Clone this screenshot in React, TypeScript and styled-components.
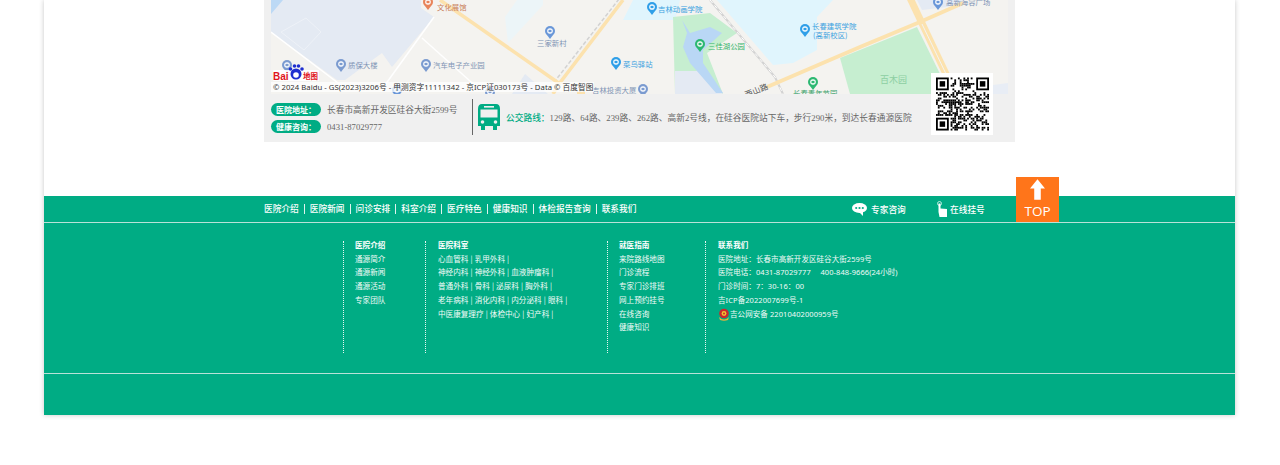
import React from "react";
import styled, { createGlobalStyle } from "styled-components";

const GlobalStyle = createGlobalStyle`
  html, body {
    margin: 0;
    padding: 0;
    background: #ffffff;
    overflow: hidden;
  }
  body {
    font-family: "Liberation Sans", "Noto Sans CJK SC", sans-serif;
  }
`;

const GREEN = "#00ac84";
const ZONE = "#e4eaf3";
const ROAD = "#fce2ae";

const Page = styled.div`
  width: 1191px;
  margin: 0 0 50px 44px;
  background: #ffffff;
  box-shadow: 0 0 5px rgba(0, 0, 0, 0.22);
`;

const MapSection = styled.section`
  height: 196px;
  padding-left: 220px;
  box-sizing: border-box;
`;

const MapPanel = styled.div`
  position: relative;
  width: 751px;
  height: 142px;
  background: #f0f0f0;
  padding: 0 7px;
  box-sizing: border-box;
`;

const MapFrame = styled.div`
  position: relative;
  width: 737px;
  height: 94px;
  overflow: hidden;
`;

const MapSvg = styled.svg`
  display: block;
  font-family: "Noto Sans CJK SC", sans-serif;
`;

const Copyright = styled.div`
  position: absolute;
  left: 0;
  top: 82px;
  width: 323px;
  height: 10px;
  padding-left: 2px;
  box-sizing: border-box;
  background: rgba(255, 255, 255, 0.72);
  color: #333;
  font-family: "Noto Sans", "Noto Sans CJK SC", sans-serif;
  font-size: 7.7px;
  letter-spacing: 0.04px;
  line-height: 10px;
  white-space: nowrap;
`;

const InfoBar = styled.div`
  display: flex;
  align-items: center;
  height: 48px;
  font-family: "Liberation Serif", "Noto Sans CJK SC", serif;
  font-size: 8.7px;
  color: #666;
`;

const AddressBlock = styled.div`
  display: flex;
  flex-direction: column;
  gap: 4px;
  width: 201px;
`;

const AddressRow = styled.div`
  display: flex;
  align-items: center;
  gap: 6px;
  white-space: nowrap;
`;

const Pill = styled.span`
  width: 50px;
  height: 13px;
  border-radius: 7px;
  background: ${GREEN};
  color: #fff;
  font-family: "Noto Sans CJK SC", sans-serif;
  font-size: 8px;
  font-weight: 700;
  line-height: 13px;
  text-align: center;
`;

const RouteBlock = styled.div`
  display: flex;
  align-items: center;
  height: 36px;
  margin-top: -2px;
  border-left: 1px solid #666;
  padding-left: 5px;
  white-space: nowrap;
`;

const RouteText = styled.span`
  margin-left: 6px;
  letter-spacing: 0.03px;
`;

const RouteLabel = styled.span`
  color: ${GREEN};
  font-family: "Noto Sans CJK SC", sans-serif;
  font-weight: 500;
`;

const QrBox = styled.div`
  position: absolute;
  left: 667px;
  top: 73px;
  width: 62px;
  height: 62px;
  background: #fff;
  display: flex;
  align-items: center;
  justify-content: center;
`;

const Footer = styled.footer`
  background: ${GREEN};
  height: 219px;
  color: #fff;
  font-family: "Noto Sans CJK SC", sans-serif;
`;

const NavBar = styled.div`
  position: relative;
  display: flex;
  align-items: center;
  height: 26px;
  padding-left: 220px;
  border-bottom: 1px solid #b9e2d8;
  font-size: 8.7px;
  font-weight: 500;
  white-space: nowrap;
`;

const NavLinks = styled.nav`
  display: flex;
  width: 588px;
`;

const NavLink = styled.span`
  padding: 0 5px;
  line-height: 10px;
  border-left: 1px solid #dff3ee;
  &:first-child {
    padding-left: 0;
    border-left: 0;
  }
`;

const NavTool = styled.span<{ $width: number; $gap: number }>`
  display: flex;
  align-items: center;
  gap: ${(p) => p.$gap}px;
  width: ${(p) => p.$width}px;
`;

const TopButton = styled.div`
  position: absolute;
  left: 972px;
  top: -19px;
  width: 43px;
  height: 45px;
  background: #ff751a;
  display: flex;
  flex-direction: column;
  align-items: center;
  font-family: "Open Sans", "Liberation Sans", sans-serif;
  font-size: 13.5px;
  line-height: 14px;
`;

const TopArrow = styled.svg`
  margin-top: 2px;
  margin-bottom: 4px;
`;

const Columns = styled.div`
  display: flex;
  height: 132px;
  padding: 18px 0 0 299px;
  border-bottom: 1px solid #b9e2d8;
`;

const Column = styled.div<{ $width: number; $pad: number; $contact: boolean }>`
  width: ${(p) => p.$width}px;
  height: 112px;
  padding-top: ${(p) => (p.$contact ? 1 : 0)}px;
  padding-left: ${(p) => p.$pad}px;
  box-sizing: border-box;
  border-left: 1px dotted #e6f6f2;
  font-family: ${(p) => (p.$contact ? `"Noto Sans", "Noto Sans CJK SC", sans-serif` : `"Noto Sans CJK SC", sans-serif`)};
  font-size: ${(p) => (p.$contact ? 7.5 : 7.6)}px;
  letter-spacing: ${(p) => (p.$contact ? 0.08 : 0)}px;
  line-height: 13.7px;
  word-spacing: ${(p) => (p.$contact ? 0 : 0.4)}px;
  white-space: nowrap;
`;

const ColumnTitle = styled.div`
  margin-top: -3px;
  font-weight: 700;
`;

const ColumnRow = styled.div`
  display: flex;
  align-items: center;
  color: #f2fbf8;
`;

type PinProps = { x: number; y: number; color: string };

const Pin = ({ x, y, color }: PinProps) => (
  <g>
    <circle cx={x} cy={y} r={5} fill={color} />
    <path d={`M${x - 3} ${y + 4}L${x} ${y + 8}L${x + 3} ${y + 4}Z`} fill={color} />
    <circle cx={x} cy={y} r={2.8} fill="#fff" />
    <rect x={x - 1.5} y={y - 1.2} width={3} height={2.4} fill={color} />
  </g>
);

type LabelProps = { x: number; y: number; color?: string; size?: number; children: React.ReactNode };

const Label = ({ x, y, color = "#7f93b5", size = 7.4, children }: LabelProps) => (
  <text x={x} y={y} fill={color} fontSize={size}>
    {children}
  </text>
);

const MapPicture = () => (
  <MapSvg width={737} height={94} viewBox="271 0 737 94">
    <rect x={271} y={0} width={737} height={94} fill="#f4f3f0" />
    <polygon points="271,0 421,0 421,8 434,17 392,67 382,53 345,80 337,80 271,32" fill={ZONE} />
    <polygon points="281,32 306,18 321,32 304,50" fill="none" stroke="#eef2f8" strokeWidth={1} />
    <polygon points="271,14 283,0 271,0" fill="#bcd9f5" />
    <polyline points="271,32 342,86" stroke="#fff" strokeWidth={1.5} fill="none" />
    <polyline points="434,17 385,85" stroke="#fff" strokeWidth={1.5} fill="none" />
    <polyline points="422,38 480,90" stroke="#fff" strokeWidth={1.5} fill="none" />
    <polygon points="517,0 543,0 543,5 508,43 505,17" fill="#ecf5f8" />
    <polygon points="633,0 717,0 773,65 793,63 817,50 817,17 833,0 633,0" fill="#e0f5fd" />
    <polygon points="633,0 623,20 660,20 675,20 680,0" fill="#e0f5fd" />
    <polygon points="512,94 525,74 548,94" fill={ZONE} />
    <polygon points="673,17 710,13 737,33 707,53 723,94 675,94" fill="#c6eed0" />
    <polygon points="675,71 700,71 723,94 675,94" fill={ZONE} />
    <polygon points="682,20 690,33 710,27 722,33 703,50 703,63 723,93 716,93 690,63 683,47 687,33" fill="#b9d7f5" />
    <polygon points="840,58 917,27 943,80 943,94 850,94" fill="#c6eed0" />
    <polygon points="917,0 922,10 947,7 965,0" fill={ZONE} />
    <polygon points="993,85 1008,83 1008,94 993,94" fill="#e8edf5" />
    <polyline points="710,0 775,77 783,94" stroke="#d2d2d2" strokeWidth={2} fill="none" />
    <polyline points="710,0 775,77 783,94" stroke="#fff" strokeWidth={1} strokeDasharray="4 3" fill="none" />
    <polyline points="619,-1 555,81" stroke="#d2d2d2" strokeWidth={1.5} strokeDasharray="4 2" fill="none" />
    <polyline points="440,0 560,84" stroke={ROAD} strokeWidth={3.5} fill="none" />
    <polyline points="623,0 559,84 553,94" stroke={ROAD} strokeWidth={3.5} fill="none" />
    <polyline points="767,87 860,47 920,22 963,3" stroke={ROAD} strokeWidth={4} fill="none" />
    <polyline points="910,-2 947,76" stroke={ROAD} strokeWidth={7} fill="none" />
    <polyline points="922,24 947,76" stroke="#f4f3f0" strokeWidth={1} fill="none" />
    <polyline points="577,93 585,93" stroke={ROAD} strokeWidth={3} fill="none" />

    <Pin x={428} y={2} color="#e8845a" />
    <Label x={437} y={10} color="#c9805a">文化展馆</Label>
    <Pin x={341} y={64} color="#7b9bd0" />
    <Label x={348} y={68}>质保大楼</Label>
    <Pin x={426} y={64} color="#7b9bd0" />
    <Label x={433} y={68}>汽车电子产业园</Label>
    <Pin x={550} y={31} color="#6a97d8" />
    <Label x={537} y={46}>三家新村</Label>
    <Pin x={616} y={62} color="#2f9fe8" />
    <Label x={623} y={67} color="#3ba2e0">菜鸟驿站</Label>
    <Label x={592} y={93}>吉林投资大厦</Label>
    <Pin x={643} y={89} color="#7b9bd0" />
    <Pin x={397} y={90} color="#6a97d8" />
    <Pin x={490} y={92} color="#7b9bd0" />
    <Pin x={652} y={7} color="#2f9fe8" />
    <Label x={658} y={12} color="#3ba2e0">吉林动画学院</Label>
    <Pin x={700} y={44} color="#2cb872" />
    <Label x={708} y={49} color="#35b56a">三佳湖公园</Label>
    <Pin x={805} y={29} color="#2f9fe8" />
    <Label x={812} y={29} color="#3ba2e0">长春建筑学院</Label>
    <Label x={813} y={38} color="#3ba2e0">(高新校区)</Label>
    <Label x={880} y={83} color="#8dcfa2" size={9}>百木园</Label>
    <Pin x={813} y={82} color="#2cb872" />
    <Label x={793} y={96} color="#3ba26a">长春青年节园</Label>
    <Pin x={938} y={2} color="#6a97d8" />
    <Label x={946} y={5}>高新海容广场</Label>
    <text x={744} y={94} fill="#555" fontSize={8} transform="rotate(-22 755 90)">西山路</text>

    <Pin x={287} y={65} color="#7b9bd0" />
    <rect x={273} y={70} width={46} height={11} rx={1} fill="#fff" opacity={0.9} />
    <text x={273} y={79.5} fill="#e0141c" fontSize={10} fontWeight={700} fontFamily="Liberation Sans">Bai</text>
    <circle cx={296} cy={74} r={5.5} fill="#1f2fd0" />
    <circle cx={296} cy={75} r={2.8} fill="#fff" />
    <circle cx={290.5} cy={69} r={1.8} fill="#1f2fd0" />
    <circle cx={294.5} cy={66} r={1.8} fill="#1f2fd0" />
    <circle cx={298.5} cy={66} r={1.8} fill="#1f2fd0" />
    <circle cx={302} cy={69} r={1.8} fill="#1f2fd0" />
    <text x={303} y={79} fill="#e0141c" fontSize={7.5} fontWeight={700}>地图</text>
  </MapSvg>
);

const BusIcon = () => (
  <svg width={22} height={26} viewBox="0 0 22 26">
    <path
      d="M4 0H18Q22 0 22 5V22H19V26H15V22H7V26H3V22H0V5Q0 0 4 0Z"
      fill={GREEN}
    />
    <rect x={6} y={2} width={10} height={1.6} fill="#f0f0f0" />
    <rect x={2.5} y={5.5} width={17} height={8} fill="#f0f0f0" />
    <circle cx={4.5} cy={18} r={1.8} fill="#f0f0f0" />
    <circle cx={17.5} cy={18} r={1.8} fill="#f0f0f0" />
  </svg>
);

const QR_SIZE = 29;

// finder squares sit in three corners, the rest is a fixed pseudo random fill
const inFinder = (x: number, y: number) =>
  (x < 8 && y < 8) || (x >= QR_SIZE - 8 && y < 8) || (x < 8 && y >= QR_SIZE - 8);

const isDark = (x: number, y: number) => {
  const v = Math.sin(x * 12.9898 + y * 78.233) * 43758.5453;
  return v - Math.floor(v) < 0.5;
};

const QrCode = () => {
  const cells: React.ReactNode[] = [];
  for (let y = 0; y < QR_SIZE; y++) {
    for (let x = 0; x < QR_SIZE; x++) {
      if (!inFinder(x, y) && isDark(x, y)) {
        cells.push(<rect key={`${x}-${y}`} x={x} y={y} width={1} height={1} />);
      }
    }
  }
  const finders = [
    [0, 0],
    [QR_SIZE - 7, 0],
    [0, QR_SIZE - 7],
  ];
  return (
    <svg width={53} height={54} viewBox={`0 0 ${QR_SIZE} ${QR_SIZE}`}>
      {cells}
      {finders.map(([x, y]) => (
        <g key={`${x}-${y}`}>
          <rect x={x} y={y} width={7} height={7} />
          <rect x={x + 1} y={y + 1} width={5} height={5} fill="#fff" />
          <rect x={x + 2} y={y + 2} width={3} height={3} />
        </g>
      ))}
    </svg>
  );
};

const ChatIcon = () => (
  <svg width={15} height={13} viewBox="0 0 15 13">
    <ellipse cx={7.5} cy={5} rx={7.5} ry={5} fill="#fff" />
    <path d="M7 9L11 13L11 8Z" fill="#fff" />
    <circle cx={4.2} cy={5} r={1.1} fill={GREEN} />
    <circle cx={7.5} cy={5} r={1.1} fill={GREEN} />
    <circle cx={10.8} cy={5} r={1.1} fill={GREEN} />
  </svg>
);

const HandIcon = () => (
  <svg width={10} height={16} viewBox="0 0 10 16">
    <circle cx={2.5} cy={2.5} r={2} fill="none" stroke="#fff" strokeWidth={0.7} />
    <path d="M1.5 2.5H3.5V7.5L10 8V16H2.5L1.5 11Z" fill="#fff" />
  </svg>
);

const BadgeIcon = () => (
  <svg width={12} height={13} viewBox="0 0 12 13">
    <path d="M1 9Q6 14 11 9L10 12Q6 13.500 2 12Z" fill="#e8b23a" />
    <circle cx={6} cy={5.500} r={4.800} fill="#c9282d" />
    <circle cx={6} cy={5.500} r={2.400} fill="#f2c230" />
    <circle cx={6} cy={5.500} r={1} fill="#c9282d" />
  </svg>
);

const navItems = ["医院介绍", "医院新闻", "问诊安排", "科室介绍", "医疗特色", "健康知识", "体检报告查询", "联系我们"];

const columns = [
  { title: "医院介绍", width: 82, pad: 11, rows: ["通源简介", "通源新闻", "通源活动", "专家团队"] },
  {
    title: "医院科室",
    width: 182,
    pad: 12,
    rows: [
      "心血管科 | 乳甲外科 |",
      "神经内科 | 神经外科 | 血液肿瘤科 |",
      "普通外科 | 骨科 | 泌尿科 | 胸外科 |",
      "老年病科 | 消化内科 | 内分泌科 | 眼科 |",
      "中医康复理疗 | 体检中心 | 妇产科 |",
    ],
  },
  {
    title: "就医指南",
    width: 98,
    pad: 11,
    rows: ["来院路线地图", "门诊流程", "专家门诊排班", "网上预约挂号", "在线咨询", "健康知识"],
  },
  {
    title: "联系我们",
    width: 300,
    pad: 12,
    rows: [
      "医院地址：长春市高新开发区硅谷大街2599号",
      "医院电话：0431-87029777　 400-848-9666(24小时)",
      "门诊时间：7：30-16：00",
      "吉ICP备2022007699号-1",
    ],
  },
];

export default function App() {
  return (
    <>
      <GlobalStyle />
      <Page>
        <MapSection>
          <MapPanel>
            <MapFrame>
              <MapPicture />
              <Copyright>© 2024 Baidu - GS(2023)3206号 - 甲测资字11111342 - 京ICP证030173号 - Data © 百度智图</Copyright>
            </MapFrame>
            <InfoBar>
              <AddressBlock>
                <AddressRow>
                  <Pill>医院地址：</Pill>
                  长春市高新开发区硅谷大街2599号
                </AddressRow>
                <AddressRow>
                  <Pill>健康咨询：</Pill>
                  0431-87029777
                </AddressRow>
              </AddressBlock>
              <RouteBlock>
                <BusIcon />
                <RouteText>
                  <RouteLabel>公交路线：</RouteLabel>
                  129路、64路、239路、262路、高新2号线，在硅谷医院站下车，步行290米，到达长春通源医院
                </RouteText>
              </RouteBlock>
            </InfoBar>
            <QrBox>
              <QrCode />
            </QrBox>
          </MapPanel>
        </MapSection>
        <Footer>
          <NavBar>
            <NavLinks>
              {navItems.map((item) => (
                <NavLink key={item}>{item}</NavLink>
              ))}
            </NavLinks>
            <NavTool $width={85} $gap={4}>
              <ChatIcon />
              专家咨询
            </NavTool>
            <NavTool $width={60} $gap={3}>
              <HandIcon />
              在线挂号
            </NavTool>
            <TopButton>
              <TopArrow width={15} height={21} viewBox="0 0 16 22">
                <path d="M8 0L16 10H11.500V22H4.500V10H0Z" fill="#fff" />
              </TopArrow>
              TOP
            </TopButton>
          </NavBar>
          <Columns>
            {columns.map((col, i) => (
              <Column key={col.title} $width={col.width} $pad={col.pad} $contact={i === 3}>
                <ColumnTitle>{col.title}</ColumnTitle>
                {col.rows.map((row) => (
                  <ColumnRow key={row}>{row}</ColumnRow>
                ))}
                {i === 3 && (
                  <ColumnRow>
                    <BadgeIcon />
                    吉公网安备 22010402000959号
                  </ColumnRow>
                )}
              </Column>
            ))}
          </Columns>
        </Footer>
      </Page>
    </>
  );
}
